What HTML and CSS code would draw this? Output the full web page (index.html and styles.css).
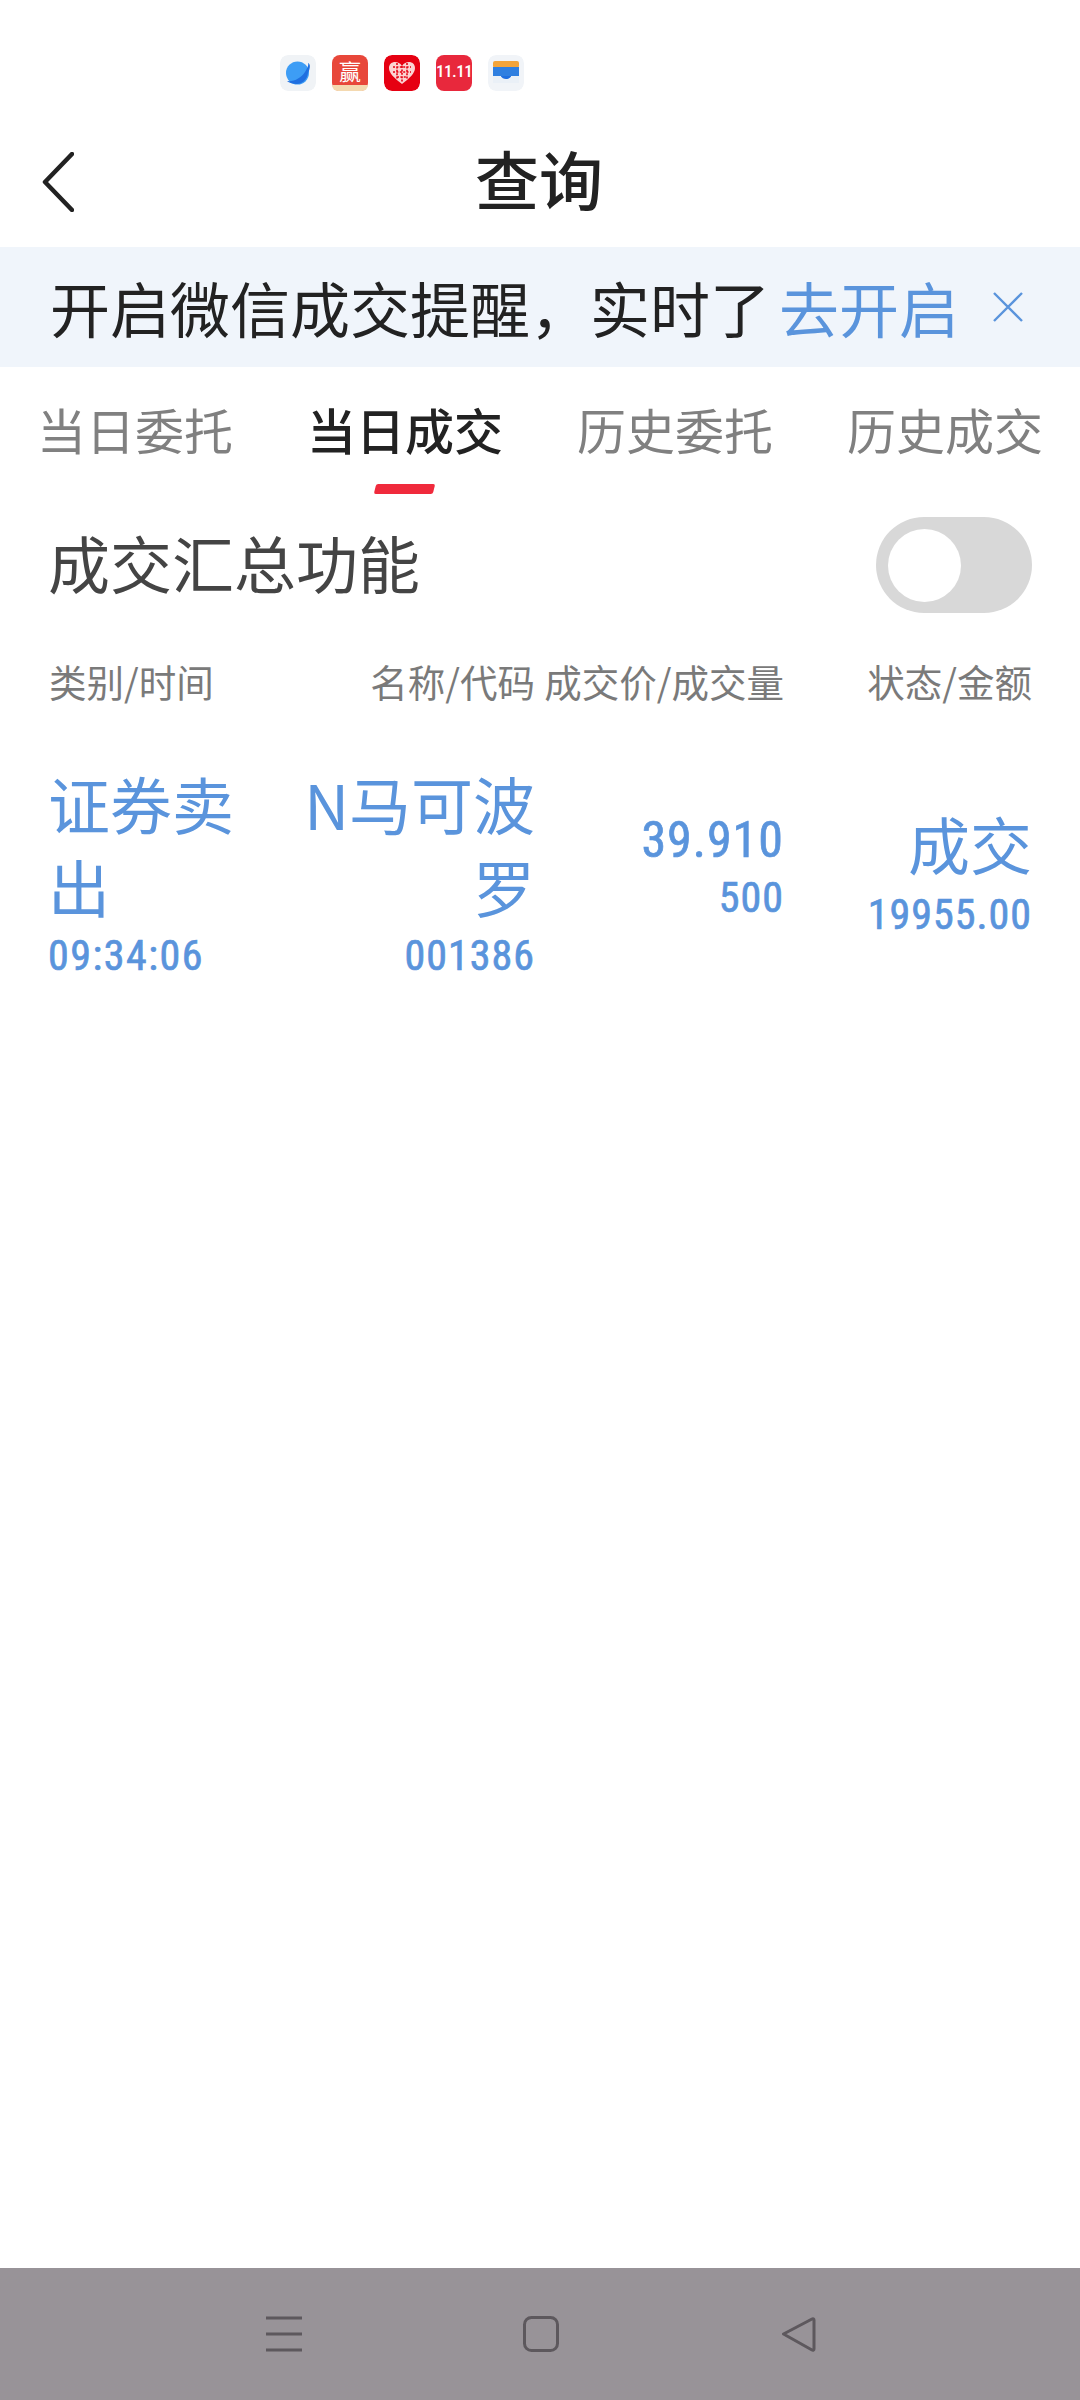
FILE: index.html
```html
<!DOCTYPE html>
<html lang="zh-CN">
<head>
  <meta charset="UTF-8">
  <meta name="viewport" content="width=device-width, initial-scale=1.0">
  <title>查询</title>
  <link rel="stylesheet" href="styles.css">
</head>
<body>
  <div class="page">
    <!-- Status bar -->
    <div class="status-bar">
      <svg class="app-icon" viewBox="0 0 36 36">
        <rect width="36" height="36" rx="8" fill="#f0f3f6"/>
        <circle cx="17.500" cy="18" r="11.500" fill="#3d9df5"/>
        <path d="M7 26c7 1 14-3 18-9 2-3 4-7 3-9 3 1 2 6 0 10-1 7-6 11-11 11-4 0-8-1-10-3z" fill="#1f6fe0"/>
      </svg>
      <div class="app-icon win-icon"><span class="win-char">赢</span><span class="win-foot"></span></div>
      <svg class="app-icon" viewBox="0 0 36 36">
        <rect width="36" height="36" rx="8" fill="#e60012"/>
        <path d="M18 29C10 23 5 18 5 13c0-4 3-6 6-6 3 0 5 1 7 4 2-3 4-4 7-4 3 0 6 2 6 6 0 5-5 10-13 16z" fill="#fbd3d3"/>
        <path d="M9 12h18M9 17h18M13 22h10M13 8v16M18 11v16M23 8v16" stroke="#e60012" stroke-width="1.6" stroke-dasharray="2 1.4"/>
      </svg>
      <div class="app-icon sale-icon">11.11</div>
      <svg class="app-icon" viewBox="0 0 36 36">
        <rect width="36" height="36" rx="8" fill="#f1f4f8"/>
        <rect x="5" y="6" width="26" height="7" rx="2" fill="#f3a43a"/>
        <rect x="5" y="12" width="26" height="10" fill="#2f7fe0"/>
        <path d="M5 21h8c1 4 9 4 10 0h8v7H5z" fill="#eaf0f7"/>
        <path d="M13 21c1 4 9 4 10 0z" fill="#1f6fe0"/>
      </svg>
    </div>

    <!-- Title bar -->
    <header class="title-bar">
      <svg class="back-icon" viewBox="0 0 32 60">
        <path d="M30 2 3 30l27 28" fill="none" stroke="#222" stroke-width="4.500" stroke-linecap="round" stroke-linejoin="round"/>
      </svg>
      <h1 class="title">查询</h1>
    </header>

    <!-- WeChat notice -->
    <div class="notice">
      <span class="notice-text">开启微信成交提醒，实时了</span>
      <span class="notice-link">去开启</span>
      <svg class="notice-close" viewBox="0 0 32 32">
        <path d="M2 2l28 28M30 2 2 30" stroke="#5a94dc" stroke-width="2.400" fill="none"/>
      </svg>
    </div>

    <!-- Tabs -->
    <nav class="tabs">
      <span class="tab">当日委托</span>
      <span class="tab active">当日成交</span>
      <span class="tab">历史委托</span>
      <span class="tab">历史成交</span>
    </nav>

    <!-- Summary switch -->
    <div class="summary">
      <span class="summary-label">成交汇总功能</span>
      <div class="toggle"><span class="knob"></span></div>
    </div>

    <!-- Deals table -->
    <div class="table-row table-head">
      <span>类别/时间</span>
      <span class="right">名称/代码</span>
      <span class="right">成交价/成交量</span>
      <span class="right">状态/金额</span>
    </div>
    <div class="table-row deal">
      <div>
        <div class="big">证券卖出</div>
        <div class="num time">09:34:06</div>
      </div>
      <div class="right">
        <div class="big">N马可波罗</div>
        <div class="num">001386</div>
      </div>
      <div class="right">
        <div class="price">39.910</div>
        <div class="num qty">500</div>
      </div>
      <div class="right">
        <div class="big">成交</div>
        <div class="num amount">19955.00</div>
      </div>
    </div>

    <!-- System navigation -->
    <footer class="nav-bar">
      <svg class="nav-icon" viewBox="0 0 36 36">
        <path d="M0 2h36M0 18h36M0 34h36" stroke="#5d585d" stroke-width="3"/>
      </svg>
      <svg class="nav-icon" viewBox="0 0 36 36">
        <rect x="1.500" y="1.500" width="33" height="33" rx="7" fill="none" stroke="#5d585d" stroke-width="3"/>
      </svg>
      <svg class="nav-icon" viewBox="0 0 36 36">
        <path d="M32 3 3.500 18 32 34c1 .5 2 0 2-1V4c0-1-1-1.500-2-1z" fill="none" stroke="#5d585d" stroke-width="3" stroke-linejoin="round"/>
      </svg>
    </footer>
  </div>
</body>
</html>
```

FILE: styles.css
```css
/* General styling */
body {
  margin: 0;
  padding: 0;
  background-color: #fff;
  font-family: "Noto Sans CJK SC", "Noto Sans", sans-serif;
}

.page {
  width: 1080px;
  height: 2400px;
  display: flex;
  flex-direction: column;
  overflow: hidden;
}

/* Status bar */
.status-bar {
  height: 120px;
  box-sizing: border-box;
  padding: 55px 0 0 280px;
  display: flex;
  gap: 16px;
}

.app-icon {
  width: 36px;
  height: 36px;
  border-radius: 8px;
  flex: none;
}

.win-icon {
  position: relative;
  background-color: #e8473a;
  text-align: center;
}

.win-char {
  display: block;
  color: #fff;
  font-size: 22px;
  line-height: 30px;
}

.win-foot {
  position: absolute;
  left: 0;
  right: 0;
  bottom: 0;
  height: 6px;
  border-radius: 0 0 8px 8px;
  background-color: #f4d9b0;
}

.sale-icon {
  background-color: #e8283c;
  color: #fff;
  font-family: "Roboto", sans-serif;
  font-stretch: 75%;
  font-size: 17px;
  font-weight: 500;
  line-height: 32px;
  letter-spacing: -0.5px;
  text-align: center;
}

/* Title bar */
.title-bar {
  position: relative;
  height: 127px;
  display: flex;
  justify-content: center;
}

.back-icon {
  position: absolute;
  left: 42px;
  top: 32px;
  width: 32px;
  height: 60px;
}

.title {
  margin: 17px 0 0 -2px;
  font-size: 64px;
  font-weight: 500;
  line-height: 80px;
  color: #222;
}

/* Notice */
.notice {
  height: 120px;
  box-sizing: border-box;
  padding: 0 0 2px 50px;
  display: flex;
  align-items: center;
  background-color: #f0f5fb;
  font-size: 60px;
  color: #222;
}

.notice-link {
  margin-left: 9px;
  color: #5a94dc;
}

.notice-close {
  width: 32px;
  height: 32px;
  margin: 2px 0 0 33px;
}

/* Tabs */
.tabs {
  height: 126px;
  box-sizing: border-box;
  padding: 27px 37px 0 37px;
  display: flex;
  justify-content: space-between;
  align-items: flex-start;
  font-size: 49px;
  line-height: 70px;
  color: #808080;
}

.tab {
  position: relative;
  white-space: nowrap;
}

.tab.active {
  color: #222;
  font-weight: 500;
}

.tab.active::after {
  content: "";
  position: absolute;
  left: 68px;
  top: 90px;
  width: 59px;
  height: 10px;
  background-color: #f02a3c;
  border-radius: 2px;
  transform: skewX(-14deg);
}

/* Summary switch */
.summary {
  height: 144px;
  box-sizing: border-box;
  padding: 0 48px;
  display: flex;
  justify-content: space-between;
  align-items: center;
}

.summary-label {
  margin-top: -6px;
  font-size: 62px;
  color: #444;
}

.toggle {
  width: 156px;
  height: 96px;
  box-sizing: border-box;
  padding: 11.5px;
  border-radius: 48px;
  background-color: #d8d8d8;
}

.knob {
  display: block;
  width: 73px;
  height: 73px;
  border-radius: 50%;
  background-color: #fff;
}

/* Deals table */
.table-row {
  padding: 0 48px;
  display: grid;
  grid-template-columns: 232px 255px 249px 248px;
}

.right {
  text-align: right;
}

.table-head {
  height: 86px;
  padding-left: 49px;
  grid-template-columns: 231px 255px 249px 248px;
  align-items: center;
  font-size: 37.5px;
  color: #7a7a7a;
  white-space: nowrap;
}

.deal {
  margin-top: 39px;
  align-items: center;
  color: #5a94dc;
}

.big {
  font-size: 62px;
  line-height: 83px;
}

.price {
  font-family: "Roboto", sans-serif;
  font-stretch: 75%;
  font-size: 50px;
  line-height: 50px;
  letter-spacing: 1px;
  -webkit-text-stroke: 0.7px #5a94dc;
}

.num {
  font-family: "Roboto", sans-serif;
  font-stretch: 75%;
  font-size: 42px;
  line-height: 56px;
  letter-spacing: 1px;
  -webkit-text-stroke: 0.7px #5a94dc;
}

.time {
  letter-spacing: 1.5px;
}

.qty {
  line-height: 66px;
}

.amount {
  line-height: 60px;
}

/* System navigation */
.nav-bar {
  margin-top: auto;
  height: 132px;
  display: flex;
  background-color: #989398;
  padding: 48px 264px 0 266px;
  box-sizing: border-box;
  justify-content: space-between;
  align-items: flex-start;
}

.nav-icon {
  width: 36px;
  height: 36px;
}
```
